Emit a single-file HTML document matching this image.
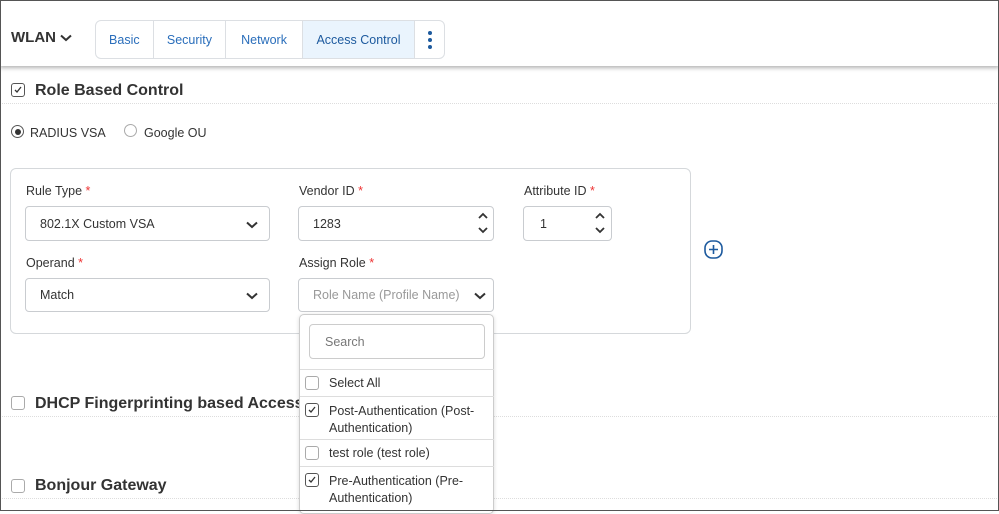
<!DOCTYPE html>
<html><head><style>
*{box-sizing:border-box;margin:0;padding:0}
body{width:999px;height:511px;overflow:hidden;background:#fff;font-family:"Liberation Sans",sans-serif;color:#333;position:relative}
.frame{position:absolute;inset:0;border:1px solid #555;z-index:50;pointer-events:none}
.abs{position:absolute}
.hdr{position:absolute;left:0;top:0;width:999px;height:66px;background:#fff;box-shadow:0 2px 4px rgba(0,0,0,.3);z-index:5}
.tabs{position:absolute;left:95px;top:20px;width:350px;height:39px;border:1px solid #dcdfe3;border-radius:6px;display:flex;overflow:hidden}
.tabs div{height:100%;display:flex;align-items:center;justify-content:center;color:#2a6ebb;font-size:12.5px;border-right:1px solid #dcdfe3}
.lbl{font-size:12.5px;color:#333}
.lbl b{color:#e33;font-weight:normal}
.inp{position:absolute;border:1px solid #c9ccd0;border-radius:4px;font-size:12.5px;display:flex;align-items:center;padding-left:14px;background:#fff}
.h2{font-size:16px;font-weight:bold;color:#333}
.cb{position:absolute;width:14px;height:14px;border:1px solid #aaa;border-radius:3px;background:#fff}
.dot{position:absolute;height:0;border-top:1px dotted #ddd;left:0;width:999px}
.row{position:absolute;left:0;width:194px;border-top:1px solid #ddd;font-size:12.5px}
</style></head><body>
<div class="frame"></div>
<div class="hdr">
 <div class="abs" style="left:11px;top:29px;font-size:15px;font-weight:bold;color:#333">WLAN</div>
 <svg class="abs" style="left:60px;top:34px" width="12" height="8"><path d="M1 1.5l5 4.5 5-4.5" fill="none" stroke="#333" stroke-width="2"/></svg>
 <div class="tabs">
  <div style="width:58px">Basic</div>
  <div style="width:73px">Security</div>
  <div style="width:77px">Network</div>
  <div style="width:113px;background:#eaf4fd;color:#1d5a9e">Access Control</div>
  <div style="width:29px;border:none;flex-direction:column;gap:3px"><i style="width:4px;height:4px;border-radius:2px;background:#1d5a9e"></i><i style="width:4px;height:4px;border-radius:2px;background:#1d5a9e"></i><i style="width:4px;height:4px;border-radius:2px;background:#1d5a9e"></i></div>
 </div>
</div>
<div class="cb" style="left:11px;top:83px;border-color:#555"></div>
<svg class="abs" style="left:13px;top:85px" width="10" height="10"><path d="M2 5l2 2 4-5" fill="none" stroke="#333" stroke-width="1.3"/></svg>
<div class="abs h2" style="left:35px;top:82px">Role Based Control</div>
<div class="dot" style="top:103px"></div>
<div class="abs" style="left:11px;top:125px;width:13px;height:13px;border:1px solid #555;border-radius:50%"><div style="margin:2.5px;width:6px;height:6px;border-radius:50%;background:#333"></div></div>
<div class="abs" style="left:30px;top:126px;font-size:12.5px">RADIUS VSA</div>
<div class="abs" style="left:124px;top:124px;width:13px;height:13px;border:1px solid #aaa;border-radius:50%"></div>
<div class="abs" style="left:144px;top:126px;font-size:12.5px">Google OU</div>

<div class="abs" style="left:10px;top:168px;width:681px;height:166px;border:1px solid #d5d8db;border-radius:6px"></div>
<div class="abs lbl" style="left:26px;top:184px">Rule Type <b>*</b></div>
<div class="abs lbl" style="left:299px;top:184px">Vendor ID <b>*</b></div>
<div class="abs lbl" style="left:524px;top:184px">Attribute ID <b>*</b></div>
<div class="inp" style="left:25px;top:206px;width:245px;height:35px">802.1X Custom VSA</div>
<svg class="abs" style="left:246px;top:221px" width="12" height="8"><path d="M1 1.5l5 4.5 5-4.5" fill="none" stroke="#333" stroke-width="2"/></svg>
<div class="inp" style="left:298px;top:206px;width:196px;height:35px">1283</div>
<svg class="abs" style="left:477px;top:211px" width="12" height="24"><path d="M2 7l4-4 4 4M2 17l4 4 4-4" fill="none" stroke="#333" stroke-width="1.8"/></svg>
<div class="inp" style="left:523px;top:206px;width:89px;height:35px;padding-left:16px">1</div>
<svg class="abs" style="left:594px;top:211px" width="12" height="24"><path d="M2 7l4-4 4 4M2 17l4 4 4-4" fill="none" stroke="#333" stroke-width="1.8"/></svg>
<svg class="abs" style="left:704px;top:240px" width="19" height="19"><rect x="1" y="1" width="17" height="17" rx="7" fill="none" stroke="#1d5a9e" stroke-width="1.6"/><path d="M9.5 5v9M5 9.5h9" stroke="#1d5a9e" stroke-width="1.6"/></svg>
<div class="abs lbl" style="left:26px;top:256px">Operand <b>*</b></div>
<div class="abs lbl" style="left:299px;top:256px">Assign Role <b>*</b></div>
<div class="inp" style="left:25px;top:278px;width:245px;height:34px">Match</div>
<svg class="abs" style="left:246px;top:292px" width="12" height="8"><path d="M1 1.5l5 4.5 5-4.5" fill="none" stroke="#333" stroke-width="2"/></svg>
<div class="inp" style="left:298px;top:278px;width:196px;height:34px;color:#999">Role Name (Profile Name)</div>
<svg class="abs" style="left:474px;top:292px" width="12" height="8"><path d="M1 1.5l5 4.5 5-4.5" fill="none" stroke="#333" stroke-width="2"/></svg>

<div class="cb" style="left:11px;top:396px"></div>
<div class="abs h2" style="left:35px;top:395px">DHCP Fingerprinting based Access</div>
<div class="dot" style="top:416px"></div>
<div class="cb" style="left:11px;top:479px"></div>
<div class="abs h2" style="left:35px;top:477px">Bonjour Gateway</div>
<div class="dot" style="top:498px"></div>

<div class="abs" style="left:299px;top:314px;width:195px;height:200px;border:1px solid #ccc;border-radius:5px;background:#fff;box-shadow:0 1px 4px rgba(0,0,0,.15);z-index:10">
 <div class="abs" style="left:9px;top:9px;width:176px;height:35px;border:1px solid #ccc;border-radius:4px;font-size:12.5px;color:#777;padding:10px 0 0 15px">Search</div>
 <div class="row" style="top:54px;height:27px"><div class="cb" style="left:5px;top:6px"></div><span class="abs" style="left:29px;top:6px">Select All</span></div>
 <div class="row" style="top:81px;height:43px"><div class="cb" style="left:5px;top:6px;border-color:#555"></div><svg class="abs" style="left:7px;top:8px" width="10" height="10"><path d="M2 5l2 2 4-5" fill="none" stroke="#333" stroke-width="1.3"/></svg><span class="abs" style="left:29px;top:6px;line-height:17px">Post-Authentication (Post-<br>Authentication)</span></div>
 <div class="row" style="top:124px;height:27px"><div class="cb" style="left:5px;top:6px"></div><span class="abs" style="left:29px;top:6px">test role (test role)</span></div>
 <div class="row" style="top:151px;height:45px"><div class="cb" style="left:5px;top:6px;border-color:#555"></div><svg class="abs" style="left:7px;top:8px" width="10" height="10"><path d="M2 5l2 2 4-5" fill="none" stroke="#333" stroke-width="1.3"/></svg><span class="abs" style="left:29px;top:6px;line-height:17px">Pre-Authentication (Pre-<br>Authentication)</span></div>
</div>
</body></html>
